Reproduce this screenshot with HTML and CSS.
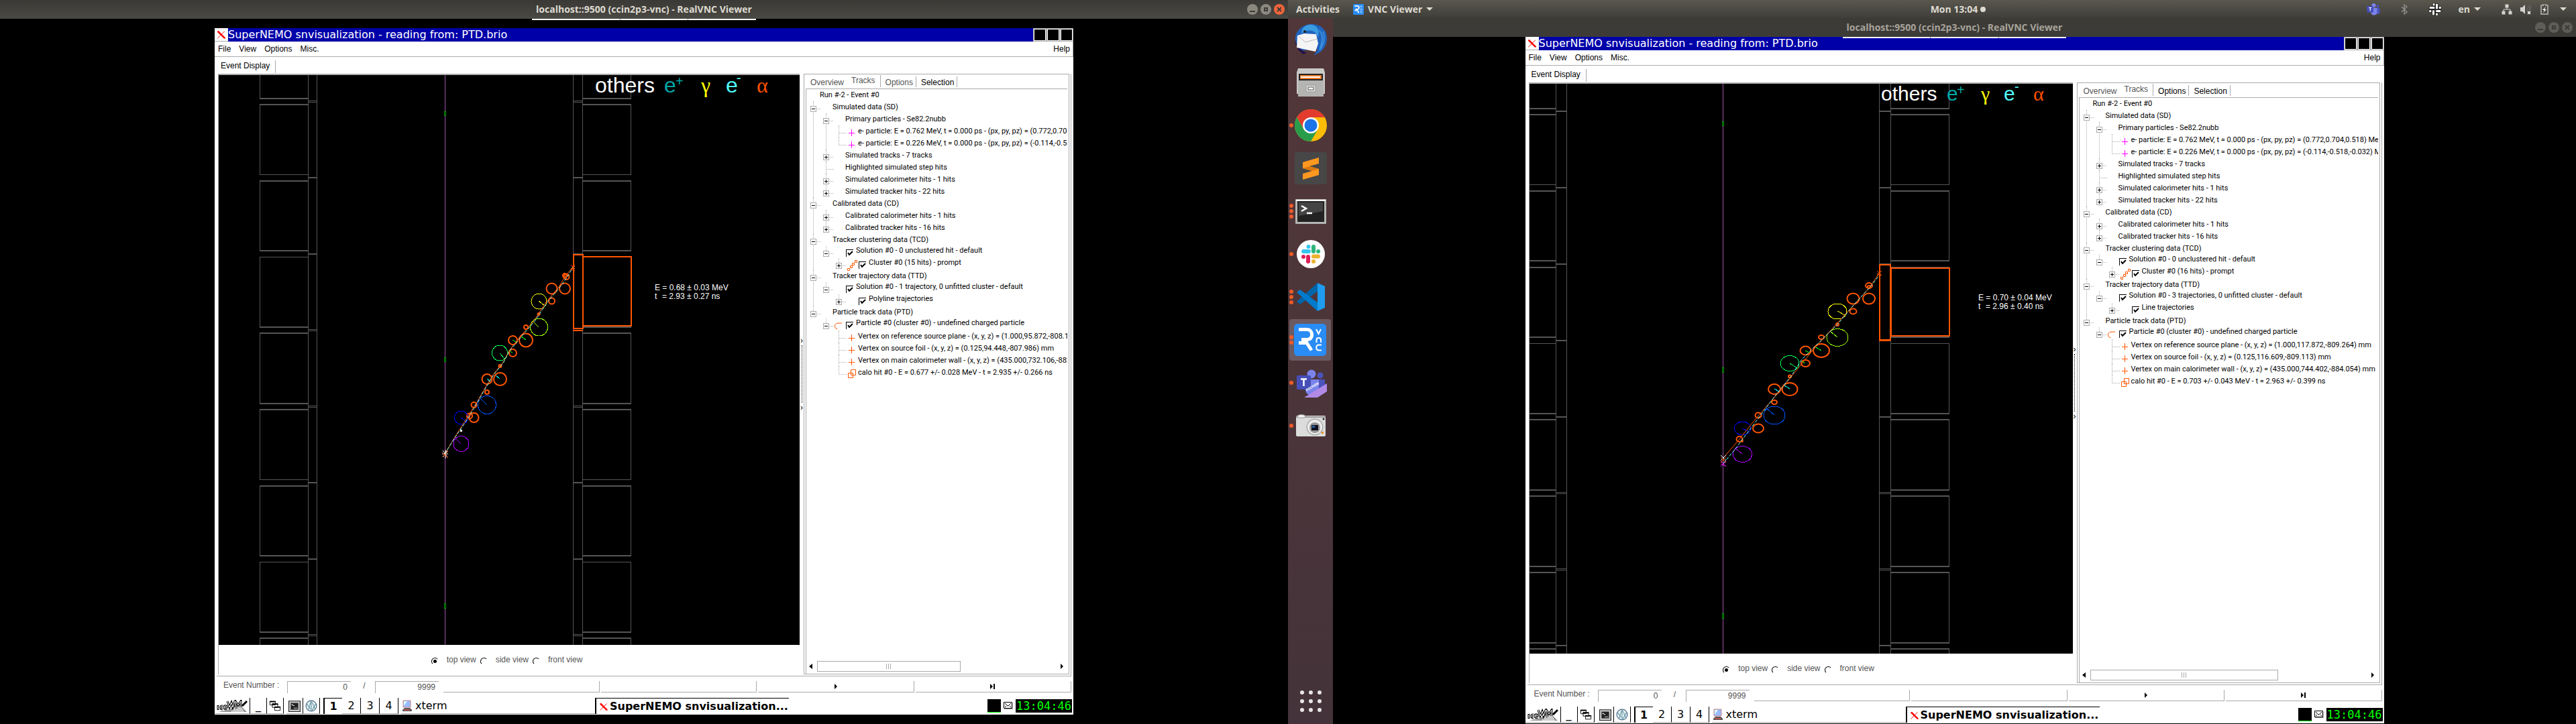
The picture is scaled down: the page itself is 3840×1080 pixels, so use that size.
FILE: index.html
```html
<!DOCTYPE html>
<html lang="en">
<head>
<meta charset="utf-8">
<title>RealVNC Viewer</title>
<link rel="stylesheet" href="styles.css">
</head>
<body>
<svg class="defs" aria-hidden="true">
  <symbol id="i-x" viewBox="0 0 20 20"><path d="M4 5 15 16M5 5l11 11" stroke="#f00" stroke-width="2"/><path d="M15 5 4 16" stroke="#f00"/></symbol>
  <symbol id="i-plus" viewBox="0 0 16 16"><path d="M7.500 3v10M3 8.500h9" stroke="currentColor" fill="none"/></symbol>
  <symbol id="i-chain" viewBox="0 0 16 16"><path d="M1.500 12.500h3v3h-3zM5.500 8.500h3v3h-3zM8.500 4.500h3v3h-3zM12.500.5h3v3h-3z" fill="none" stroke="#f50"/></symbol>
  <symbol id="i-arc" viewBox="0 0 16 16"><path d="M12 4H6C3 5 1 6 1.500 9s2 3 4 4" fill="none" stroke="#f50"/></symbol>
  <symbol id="i-boxes" viewBox="0 0 16 16"><path d="M6.500 1.500h7v8h-7zM2.500 6.500h7v7h-7z" fill="#fff" stroke="#f50"/></symbol>
  <symbol id="i-left" viewBox="0 0 6 8"><path d="M5 0v8L0 4z"/></symbol>
  <symbol id="i-right" viewBox="0 0 6 8"><path d="M1 0v8l4-4z"/></symbol>
  <symbol id="i-end" viewBox="0 0 8 8"><path d="M0 0v8l4-4zM5 0h2v8H5z"/></symbol>
  <symbol id="i-ice" viewBox="0 0 46 18"><path d="M3 18c8-3 14-2 18-5s8-7 11-6 4 1 6 4l7 7z" fill="#999"/><path d="M20 18l6-8 3 4 5-7 5 6 3 5" fill="#ccc" stroke="#444" stroke-dasharray="1 1"/><path d="M38 9 45 2M2 8v7M9 9c-4-1-4 5 0 5M11 11h4c0-3-4-3-4 0s3 3 4 2M16 2l3 9 3-7 2 7 3-9M28 11V2l4 6 4-6v9" fill="none" stroke="#000" stroke-width="3"/><path d="M2 9v5M9 9c-4-1-4 5 0 5M11 11h4c0-3-4-3-4 0s3 3 4 2M16 2l3 9 3-7 2 7 3-9M28 11V2l4 6 4-6v9" fill="none" stroke="#fff"/></symbol>
  <symbol id="i-wins" viewBox="0 0 20 18"><path d="M1.500 1.500h9v6h-9zM5.500 5.500h9v6h-9zM9.500 10.500h9v6h-9z" fill="#fff" stroke="#000"/><path d="M1 2h10M5 6h10M9 11h10" stroke="#000" stroke-width="2"/></symbol>
  <symbol id="i-term" viewBox="0 0 16 16"><path d="M.5 1.500h15v14H.5z" fill="#ccc" stroke="#222"/><path d="M3 4h10v9H3z" fill="#222"/><path d="M4 6h2v1H4zM6 7h2v1H6z" fill="#fff"/><path d="M7 10h5v2H7z" fill="#777"/></symbol>
  <symbol id="i-globe" viewBox="0 0 16 16"><circle cx="8" cy="8" r="7" fill="#e8f0f0" stroke="#468"/><path d="M8 1 4 13M8 1v14M9 3l4 9M2 5l5 7M14 5l-5 9" fill="none" stroke="#69a"/></symbol>
  <symbol id="i-pc" viewBox="0 0 14 18"><path d="M1 1h11v10H1z" fill="#9bf" stroke="#c88"/><path d="M2 2h5L2 9z" fill="#dff"/><path d="M3 12h8l3 3v2H0v-2z" fill="#555"/><path d="M2 14h9v2H2z" fill="#b55"/></symbol>
  <symbol id="i-mail" viewBox="0 0 14 11"><path d="M1 10.500h13V2" stroke="#999" fill="none"/><path d="M.5.5h12v9H.5z" fill="#fff" stroke="#000"/><path d="m2 2 4 4h1l4-4M2 8l2-2M11 8 9 6" fill="none" stroke="#000"/></symbol>
  <symbol id="i-vnc" viewBox="0 0 48 48"><rect width="48" height="48" rx="5" fill="#2a8cf5"/><path d="M7 8.500h12c10 0 10 15 1 15h-9M7 28.500h12l7 11" fill="none" stroke="#fff" stroke-width="5"/><path d="m33 8 3.500 7L40 8M33.500 28v-4c0-4 6.500-4 6.500 0v4M41 31.500h-4c-5 0-5 8 0 8h4" fill="none" stroke="#fff" stroke-width="2"/></symbol>
  <symbol id="i-teams" viewBox="0 0 48 48"><circle cx="38" cy="13" r="4.500" fill="#4b53bc"/><path d="M34 19h11v14c0 5-6 8-11 5z" fill="#4b53bc"/><circle cx="25" cy="11" r="6.500" fill="#7b83eb"/><path d="M16 19h20v15c0 12-20 12-20 0z" fill="#7b83eb"/><rect x="3" y="13" width="21" height="21" rx="2" fill="#464eb8"/><path d="M9 18.500h9M13.500 18v11" stroke="#fff" stroke-width="2.500"/></symbol>
</svg>
<div class="screens">
  <section class="screen">
    <header class="titlebar">
      <h1 class="caption">localhost::9500 (ccin2p3-vnc) - RealVNC Viewer<span class="pulltab"><i></i><i></i><i></i></span></h1>
      <div class="winbtns">
        <button aria-label="Minimise"><svg viewBox="0 0 16 16"><path d="M4 11h8" stroke-width="2"/></svg></button>
        <button aria-label="Restore"><svg viewBox="0 0 16 16"><path d="M6 6h4v4H6z" stroke-width="2"/></svg></button>
        <button class="close" aria-label="Close"><svg viewBox="0 0 16 16"><path d="m5 5 6 6m0-6-6 6" stroke-width="2"/></svg></button>
      </div>
    </header>
    <main class="desk spaced">
      <div class="remote">
        <div class="wmtitle"><svg class="xico"><use href="#i-x"/></svg><span>SuperNEMO snvisualization - reading from: PTD.brio</span><button aria-label="Iconify"></button><button aria-label="Maximise"></button><button aria-label="Close"></button></div>
        <nav class="menu"><button>File</button><button>View</button><button>Options</button><button>Misc.</button><button class="help">Help</button></nav>
        <div class="doctabs"><button>Event Display</button></div>
        <div class="split">
          <div class="frame">
            <svg class="canvas" viewBox="0 0 866 850">
              <g class="det">
                <path d="M61.500 0V35M133.500 0V35M61.500 44V148M61.500 158V261M61.500 271V376M61.500 385V490M61.500 499V603M61.500 613V716M61.500 726V830M61.500 839V850M133.500 0V850M146.500 0V850M528.500 0V850M542.500 0V850M614.500 0V35M614.500 44V148M614.500 158V261M614.500 271V376M614.500 385V490M614.500 499V603M614.500 613V716M614.500 726V830M614.500 839V850"/>
                <path class="thick" d="M61 35h72M61 44h72M61 158h72M61 262h72M61 376h72M61 385h72M61 490h72M61 499h72M61 613h72M61 717h72M61 831h72M61 840h72M542 35h73M542 44h73M542 158h73M542 262h73M542 271h73M542 376h73M542 385h73M542 490h73M542 499h73M542 613h73M542 717h73M542 831h73M542 840h73M133 153h14M133 267h14M133 608h14M133 722h14M528 153h15M528 267h15M528 608h15M528 722h15"/>
                <path d="M61 148.500h72M61 271.500h72M61 603.500h72M61 726.500h72M542 148.500h73M542 603.500h73M542 726.500h73M133 38.500h14M133 40.500h14M133 379.500h14M133 381.500h14M133 493.500h14M133 495.500h14M133 834.500h14M133 836.500h14M528 38.500h15M528 40.500h15M528 381.500h15M528 493.500h15M528 495.500h15M528 834.500h15M528 836.500h15"/>
              </g>
              <path class="foil" d="M337.500 0V850"/>
              <path class="mark" d="M336.500 54.500h2v6h-2zM336.500 421.500h2v6h-2zM336.500 788.500h2v7h-2z"/>
              <path class="hitbox" d="M529 268h14v110h-14zM543 271h72v103h-72zM528 381h15"/>
              <g class="hits">
                <circle cx="516" cy="299" r="3"/><circle cx="518.500" cy="301" r="4"/><circle cx="516" cy="318.500" r="8"/><circle cx="496.500" cy="318.500" r="8"/><circle cx="496.500" cy="337" r="4.500"/><circle cx="477" cy="356.500" r="1.500"/><circle cx="458" cy="376" r="3"/><circle cx="458" cy="395.500" r="10"/><circle cx="438.500" cy="395.500" r="6.500"/><circle cx="438.500" cy="414.500" r="5.500"/><circle cx="419.500" cy="434" r="2"/><circle cx="400" cy="453.500" r="7.500"/><circle cx="419.500" cy="453.500" r="9.500"/><circle cx="400" cy="473" r="3"/><circle cx="380.500" cy="492" r="4"/><circle cx="380.500" cy="511" r="7"/><circle cx="374" cy="508.500" r="4"/>
              </g>
              <g class="drift">
                <circle cx="477.500" cy="337.500" r="11.500" stroke="#ff0"/><circle cx="477.500" cy="376" r="13" stroke="#9f0"/><circle cx="419" cy="414.500" r="11.500" stroke="#0f5"/><circle cx="400" cy="492" r="13.500" stroke="#05f"/><circle cx="361.500" cy="511" r="10" stroke="#00f"/><circle cx="361.500" cy="550" r="11.500" stroke="#a0f"/>
                <path d="m477 337 8 6" stroke="#ff0"/><path d="m477 376-9-9" stroke="#9f0"/><path d="m419 415 7 8" stroke="#0f5"/><path d="m400 492-9-9" stroke="#05f"/><path d="m361 511 7 5" stroke="#00f"/><path d="m361 550-8-8" stroke="#a0f"/><path d="m458 395-7-5M438 395l5 3M438 414l-5-3" stroke="#0f0"/><path d="m400 453 5 4M419 453l-6-5" stroke="#0ff"/>
              </g>
              <path class="track" d="M337 565 352 540 368 515 386 486 398 465 409 447 425 427 433 411 447 393 471 365 487 340 507 316 516 301 528 286"/>
              <path class="sim" d="M337 565 352 541 369 516 387 486 399 465 410 447 425 428 433 412 447 395 472 366 489 340 508 317 519 302 528 287"/>
              <path class="vtx white" d="m334 560 7 10m0-10-7 10m-1-5h9m-4-6v13"/><path class="vtx" d="m333 563 9 8m0-10-8 8"/><path class="vtx" d="m525 283 6 6m0-6-6 6 6 3m0-7-6 6"/><path d="M360 529h3v3h-3z" fill="#fff"/>
              <g class="legend"><text x="561" y="26" fill="#fff">others</text><text x="664" y="26" fill="#00a8a8">e</text><text class="sup" x="681" y="16" fill="#00a8a8">+</text><text class="sym" x="719" y="26" fill="#ff0">γ</text><text x="756" y="26" fill="#50ffff">e</text><text class="sup" x="772" y="11" fill="#50ffff">-</text><text class="sym" x="802" y="26" fill="#ff5000">α</text></g>
              <g class="meas"><text x="650" y="321">E = 0.68 ± 0.03 MeV</text><text x="650" y="334">t</text><text x="661" y="334">= 2.93 ± 0.27 ns</text></g>
            </svg>
            <div class="views"><label><input type="radio" name="v1" checked><span>top view</span></label><label><input type="radio" name="v1"><span>side view</span></label><label><input type="radio" name="v1"><span>front view</span></label></div>
          </div>
          <div class="handle"><i>›</i><b></b><i>›</i></div>
          <aside class="side">
            <div class="tabs"><button class="dim">Overview</button><button class="dim on">Tracks</button><button class="dim">Options</button><button>Selection</button></div>
            <div class="pane">
              <div class="tree">
                <div class="root">Run #-2 - Event #0</div>
                <ul>
                  <li><div class="row"><button class="tg minus" aria-label="Collapse"></button><span class="ic"></span>Simulated data (SD)</div>
                    <ul>
                      <li><div class="row"><button class="tg minus" aria-label="Collapse"></button><span class="ic"></span>Primary particles - Se82.2nubb</div>
                        <ul>
                          <li><div class="row"><span class="lf"></span><svg class="ic mg"><use href="#i-plus"/></svg>e- particle: E = 0.762 MeV, t = 0.000 ps - (px, py, pz) = (0.772,0.704,0.518) MeV</div></li>
                          <li><div class="row"><span class="lf"></span><svg class="ic mg"><use href="#i-plus"/></svg>e- particle: E = 0.226 MeV, t = 0.000 ps - (px, py, pz) = (-0.114,-0.518,-0.032) MeV</div></li>
                        </ul></li>
                      <li><div class="row"><button class="tg plus" aria-label="Expand"></button><span class="ic"></span>Simulated tracks - 7 tracks</div></li>
                      <li><div class="row"><span class="lf"></span><span class="ic"></span>Highlighted simulated step hits</div></li>
                      <li><div class="row"><button class="tg plus" aria-label="Expand"></button><span class="ic"></span>Simulated calorimeter hits - 1 hits</div></li>
                      <li><div class="row"><button class="tg plus" aria-label="Expand"></button><span class="ic"></span>Simulated tracker hits - 22 hits</div></li>
                    </ul></li>
                  <li><div class="row"><button class="tg minus" aria-label="Collapse"></button><span class="ic"></span>Calibrated data (CD)</div>
                    <ul>
                      <li><div class="row"><button class="tg plus" aria-label="Expand"></button><span class="ic"></span>Calibrated calorimeter hits - 1 hits</div></li>
                      <li><div class="row"><button class="tg plus" aria-label="Expand"></button><span class="ic"></span>Calibrated tracker hits - 16 hits</div></li>
                    </ul></li>
                  <li><div class="row"><button class="tg minus" aria-label="Collapse"></button><span class="ic"></span>Tracker clustering data (TCD)</div>
                    <ul>
                      <li><div class="row"><button class="tg minus" aria-label="Collapse"></button><span class="ic"></span><label><input type="checkbox" checked><span>Solution #0 - 0 unclustered hit - default</span></label></div>
                        <ul><li><div class="row"><button class="tg plus" aria-label="Expand"></button><svg class="ic"><use href="#i-chain"/></svg><label><input type="checkbox" checked><span>Cluster #0 (15 hits) - prompt</span></label></div></li></ul></li>
                    </ul></li>
                  <li><div class="row"><button class="tg minus" aria-label="Collapse"></button><span class="ic"></span>Tracker trajectory data (TTD)</div>
                    <ul>
                      <li><div class="row"><button class="tg minus" aria-label="Collapse"></button><span class="ic"></span><label><input type="checkbox" checked><span>Solution #0 - 1 trajectory, 0 unfitted cluster - default</span></label></div>
                        <ul><li><div class="row"><button class="tg plus" aria-label="Expand"></button><span class="ic"></span><label><input type="checkbox" checked><span>Polyline trajectories</span></label></div></li></ul></li>
                    </ul></li>
                  <li><div class="row"><button class="tg minus" aria-label="Collapse"></button><span class="ic"></span>Particle track data (PTD)</div>
                    <ul>
                      <li><div class="row"><button class="tg minus" aria-label="Collapse"></button><svg class="ic"><use href="#i-arc"/></svg><label><input type="checkbox" checked><span>Particle #0 (cluster #0) - undefined charged particle</span></label></div>
                        <ul>
                          <li><div class="row"><span class="lf"></span><svg class="ic or"><use href="#i-plus"/></svg>Vertex on reference source plane - (x, y, z) = (1.000,95.872,-808.153) mm</div></li>
                          <li><div class="row"><span class="lf"></span><svg class="ic or"><use href="#i-plus"/></svg>Vertex on source foil - (x, y, z) = (0.125,94.448,-807.986) mm</div></li>
                          <li><div class="row"><span class="lf"></span><svg class="ic or"><use href="#i-plus"/></svg>Vertex on main calorimeter wall - (x, y, z) = (435.000,732.106,-882.869) mm</div></li>
                          <li><div class="row"><span class="lf"></span><svg class="ic"><use href="#i-boxes"/></svg>calo hit #0 - E = 0.677 +/- 0.028 MeV - t = 2.935 +/- 0.266 ns</div></li>
                        </ul></li>
                    </ul></li>
                </ul>
              </div>
              <div class="hbar"><button aria-label="Scroll left"><svg><use href="#i-left"/></svg></button><div class="groove"><div class="thumb a"><i></i><i></i><i></i></div></div><button aria-label="Scroll right"><svg><use href="#i-right"/></svg></button></div>
            </div>
          </aside>
        </div>
        <div class="eventbar"><label for="ev1">Event Number :</label><input id="ev1" value="0"><span>/</span><input value="9999" aria-label="Last event"><div class="steps"><button aria-label="First"></button><button aria-label="Previous"></button><button aria-label="Next"><svg><use href="#i-right"/></svg></button><button aria-label="Last"><svg><use href="#i-end"/></svg></button></div></div>
        <div class="taskbar">
          <button class="tb logo" aria-label="IceWM menu"><svg><use href="#i-ice"/></svg></button><button class="tb low" aria-label="Show desktop">_</button><button class="tb" aria-label="Windows"><svg><use href="#i-wins"/></svg></button><button class="tb gap" aria-label="Terminal"><svg><use href="#i-term"/></svg></button><button class="tb" aria-label="Browser"><svg><use href="#i-globe"/></svg></button><button class="ws sel">1</button><button class="ws">2</button><button class="ws">3</button><button class="ws">4</button><button class="task"><svg><use href="#i-pc"/></svg>xterm</button><button class="task cur"><svg class="tx"><use href="#i-x"/></svg>SuperNEMO snvisualization...</button>
          <div class="tray"><i class="cpu"></i><svg><use href="#i-mail"/></svg><time>13:04:46</time></div>
        </div>
      </div>
    </main>
  </section>

  <section class="screen">
    <header class="panel">
      <div class="pleft"><button>Activities</button><button class="app"><svg><use href="#i-vnc"/></svg>VNC Viewer<i class="caret"></i></button></div>
      <button class="clock">Mon 13:04<i class="dot"></i></button>
      <div class="status">
        <svg class="s-teams"><use href="#i-teams"/></svg>
        <svg class="s-bt" viewBox="0 0 16 16"><path d="m4 4 8 8-4 3V1l4 3-8 8" fill="none" stroke="#8a8984" stroke-width="1.500"/></svg>
        <svg class="s-slack" viewBox="0 0 20 20"><path d="M8 3v5M3 8h5M12 3v5M12 8h5M8 12v5M3 12h5M12 12v5M12 12h5" stroke="#222" stroke-width="5" stroke-linecap="round"/><path d="M8 2.500V3M3 7.500h5M12.500 3v5M17 7.500h.5M2.500 12.500H3M7.500 12.500V17M12.500 12.500H17M12.500 17v.5" stroke="#fff" stroke-width="3" stroke-linecap="round"/></svg>
        <button class="lang">en<i class="caret"></i></button>
        <svg class="s-net" viewBox="0 0 16 16"><path d="M5.500.5h5v5h-5zM.5 10.500h5v5h-5zM10.500 10.500h5v5h-5z" fill="#d5d3cf"/><path d="M8 5v3M3 11V8h10v3" fill="none" stroke="#d5d3cf"/></svg>
        <svg class="s-vol" viewBox="0 0 16 16"><path d="M0 5h3l4-4v14l-4-4H0z" fill="#d5d3cf"/><path d="M9 5c2 2 2 4 0 6M11 3c3 3 3 6 1 8M13 1c3 3 3 5 2 9" fill="none" stroke="#777"/><path d="m11 11 4 4m0-4-4 4" stroke="#fff" stroke-width="1.500"/></svg>
        <svg class="s-bat" viewBox="0 0 16 16"><path d="M3 2h3V0h4v2h3v13H3z" fill="none" stroke="#a09e9a" stroke-width="2"/><path d="m10 4-5 5h3l-2 4 5-5H8z" fill="#fff"/></svg>
        <i class="caret"></i>
      </div>
    </header>
    <div class="below">
      <nav class="dock" aria-label="Dock">
        <button aria-label="Thunderbird"><svg viewBox="0 0 48 48"><path d="M1 25C0 12 10 2 24 1c14-1 24 9 24 20 0 13-8 24-20 26 3-3 5-5 6-9L12 40C4 37 1 30 1 25z" fill="#1f63bd"/><path d="M13 46C5 41 1 34 1 24c2 9 7 16 17 20z" fill="#20124d"/><path d="m4 18 10-3 18 1 3 14-4 12L3 36z" fill="#f5f5f5"/><path d="m6 19 10 9 18-5" fill="none" stroke="#bbb"/><path d="M10 15C10 5 20-1 29 3c5 2 8 8 6 17l-5-7c-6-4-13-3-20 2z" fill="#3b9be0"/><circle cx="15" cy="12" r="2" fill="#222"/><path d="M36 10c6 5 6 15 2 27M42 12c4 8 1 20-5 28" stroke="#3b8edb" stroke-width="2" fill="none"/></svg></button>
        <button aria-label="Files"><svg viewBox="0 0 48 48"><path d="M5 3h38l2 6v32H3V9z" fill="#c9c9c7"/><path d="M6 11h36v10H6z" fill="#222"/><path d="M8 13h32v6H8z" fill="#f08030"/><path d="M9 15h29v2H9z" fill="#fff"/><path d="M5 21h38v24H5z" fill="#b4b4b2"/><rect x="17" y="28" width="14" height="10" rx="2" fill="#ddd" stroke="#999"/><path d="M20 31h8v4h-8z" fill="#fff" stroke="#555"/></svg></button>
        <button class="r1" aria-label="Chrome"><svg viewBox="0 0 48 48"><circle cx="24" cy="24" r="24" fill="#fbbc05"/><path d="M3.200 12a24 24 0 0 1 41.600 0H24L13.600 30z" fill="#e33b2e"/><path d="M3.200 12A24 24 0 0 0 24 48l10.400-18-20.800 0z" fill="#2a9d4b"/><circle cx="24" cy="24" r="12" fill="#fff"/><circle cx="24" cy="24" r="9.500" fill="#1a73e8"/></svg></button>
        <button aria-label="Sublime Text"><svg viewBox="0 0 48 48"><rect width="48" height="48" rx="3" fill="#474747"/><path d="m12 15 24-7v9l-14 4 14 4v9l-24 7v-9l14-4-14-4z" fill="#ff9820"/><path d="m12 24 14 4 10-3-14-4z" fill="#d87a10"/></svg></button>
        <button class="r3" aria-label="Terminal"><svg viewBox="0 0 48 48"><rect x="1" y="6" width="46" height="37" rx="1" fill="#b5b5b3"/><path d="M2 7h44v2H2z" fill="#fff"/><rect x="4" y="9" width="40" height="31" fill="#222"/><path d="M6 11h36v13L6 31z" fill="#444"/><path d="m10 16 7 4-7 4M18 27h8" fill="none" stroke="#fff" stroke-width="2.500"/></svg></button>
        <button class="r1" aria-label="Slack"><svg viewBox="0 0 48 48"><circle cx="24" cy="24" r="21" fill="#fff"/><g stroke-width="6" stroke-linecap="round"><path d="M13 20h8M20.500 13v.1" stroke="#36c5f0"/><path d="M28 13v7M35 20h.1" stroke="#2eb67d"/><path d="M20 28v7M13 28h.1" stroke="#e01e5a"/><path d="M28 27.500h7M28 35h.1" stroke="#ecb22e"/></g></svg></button>
        <button class="r3" aria-label="Visual Studio Code"><svg viewBox="0 0 48 48"><path d="m34 3-31 28 5 4 27-20z" fill="#0065a9"/><path d="m34 45-31-28 5-4 27 20z" fill="#007acc"/><path d="m34 3 11 5v32l-11 5z" fill="#1f9cf0"/></svg></button>
        <button class="r2 here" aria-label="VNC Viewer"><svg><use href="#i-vnc"/></svg></button>
        <button class="r1" aria-label="Teams"><svg viewBox="0 0 48 48"><use href="#i-teams"/><path d="M14 46 48 25v12L34 46z" fill="#b18ae6"/><text class="pre" x="22" y="33" transform="rotate(-31 27 42)">PREVIEW</text></svg></button>
        <button class="r1" aria-label="Camera"><svg viewBox="0 0 48 48"><rect x="2" y="9" width="44" height="31" rx="2" fill="#dcdcdc"/><path d="M2 10h44v2H2z" fill="#999"/><ellipse cx="10" cy="10" rx="6" ry="2.500" fill="#eee" stroke="#999"/><circle cx="30" cy="26" r="12.500" fill="#aaa"/><circle cx="30" cy="26" r="11" fill="#eee"/><circle cx="30" cy="27" r="8" fill="#999"/><rect x="25" y="23" width="10" height="8" fill="#112"/><path d="M26 24h4v3h-4z" fill="#26a"/><circle cx="43" cy="14" r="1.500" fill="#222"/><path d="M40 33h3v3h-3z" fill="#f0902a"/></svg></button>
        <button class="grid" aria-label="Show applications"><svg viewBox="0 0 48 48"><g fill="#e8e6e4"><circle cx="11" cy="11" r="3"/><circle cx="24" cy="11" r="3"/><circle cx="37" cy="11" r="3"/><circle cx="11" cy="24" r="3"/><circle cx="24" cy="24" r="3"/><circle cx="37" cy="24" r="3"/><circle cx="11" cy="37" r="3"/><circle cx="24" cy="37" r="3"/><circle cx="37" cy="37" r="3"/></g></svg></button>
      </nav>
      <div class="content">
        <header class="titlebar idle">
          <h1 class="caption">localhost::9500 (ccin2p3-vnc) - RealVNC Viewer<span class="pulltab"><i></i><i></i><i></i></span></h1>
          <div class="winbtns">
            <button aria-label="Minimise"><svg viewBox="0 0 16 16"><path d="M4 11h8" stroke-width="2"/></svg></button>
            <button aria-label="Restore"><svg viewBox="0 0 16 16"><path d="M6 6h4v4H6z" stroke-width="2"/></svg></button>
            <button aria-label="Close"><svg viewBox="0 0 16 16"><path d="m5 5 6 6m0-6-6 6" stroke-width="2"/></svg></button>
          </div>
        </header>
        <main class="desk">
          <div class="remote wide">
            <div class="wmtitle"><svg class="xico"><use href="#i-x"/></svg><span>SuperNEMO snvisualization - reading from: PTD.brio</span><button aria-label="Iconify"></button><button aria-label="Maximise"></button><button aria-label="Close"></button></div>
            <nav class="menu"><button>File</button><button>View</button><button>Options</button><button>Misc.</button><button class="help">Help</button></nav>
            <div class="doctabs"><button>Event Display</button></div>
            <div class="split">
              <div class="frame">
                <svg class="canvas" viewBox="0 0 810 850">
                  <g class="det">
                    <path d="M39.500 0V850M55.500 0V850M521.500 0V850M538.500 0V850M625.500 0V37M625.500 46V150M625.500 160V264M625.500 274V378M625.500 387V492M625.500 501V606M625.500 615V720M625.500 729V834M625.500 843V850"/>
                    <path class="thick" d="M0 37h39M0 46h39M0 160h39M0 264h39M0 274h39M0 378h39M0 492h39M0 501h39M0 606h39M0 615h39M0 720h39M0 729h39M0 834h39M0 843h39M538 37h88M538 46h88M538 160h88M538 264h88M538 274h88M538 378h88M538 492h88M538 501h88M538 606h88M538 615h88M538 720h88M538 729h88M538 834h88M538 843h88M39 41h16M39 155h16M39 269h16M39 383h16M39 497h16M39 838h16M521 41h17M521 155h17M521 269h17M521 497h17M521 838h17"/>
                    <path d="M0 150.500h39M0 387.500h39M538 150.500h88M538 387.500h88M39 609.500h16M39 611.500h16M39 723.500h16M39 725.500h16M521 609.500h17M521 611.500h17M521 723.500h17M521 725.500h17"/>
                  </g>
                  <path class="foil" d="M288.500 0V850"/>
                  <path class="mark" d="M287.500 56.500h2v6h-2zM287.500 423.500h2v7h-2zM287.500 790.500h2v7h-2z"/>
                  <path class="hitbox" d="M522 270h16v112h-16zM539 275h87v101h-87zM521 383h17"/>
                  <g class="hits">
                    <ellipse cx="506" cy="301" rx="5" ry="4"/><circle cx="506" cy="303" r="2"/><ellipse cx="506" cy="320.500" rx="9" ry="8"/><ellipse cx="482.500" cy="320.500" rx="9" ry="8"/><ellipse cx="482.500" cy="339.500" rx="5" ry="4"/><circle cx="459" cy="359" r="2"/><ellipse cx="435" cy="378" rx="4" ry="3"/><ellipse cx="435" cy="398" rx="12" ry="10"/><ellipse cx="411.500" cy="398" rx="8" ry="6.500"/><ellipse cx="411.500" cy="417" rx="6.500" ry="5"/><circle cx="388" cy="436.500" r="2"/><ellipse cx="365" cy="455.500" rx="9" ry="7.500"/><ellipse cx="388" cy="455.500" rx="11.500" ry="9.500"/><ellipse cx="365" cy="475" rx="4" ry="3"/><ellipse cx="341" cy="494.500" rx="4.500" ry="4"/><ellipse cx="341" cy="514" rx="8" ry="6.500"/><ellipse cx="313" cy="530" rx="4.500" ry="4"/><circle cx="317" cy="533" r="1"/>
                  </g>
                  <g class="drift">
                    <ellipse cx="459" cy="339.500" rx="14" ry="11.500" stroke="#ff0"/><ellipse cx="459" cy="378.500" rx="16" ry="13" stroke="#9f0"/><ellipse cx="388" cy="417" rx="14" ry="11.500" stroke="#0f5"/><ellipse cx="365" cy="494.500" rx="16" ry="13.500" stroke="#05f"/><ellipse cx="317.500" cy="514" rx="12" ry="10" stroke="#00f"/><ellipse cx="317.500" cy="552.500" rx="14" ry="12" stroke="#a0f"/>
                    <path d="m459 339 11 6" stroke="#ff0"/><path d="m459 378-11-9" stroke="#9f0"/><path d="m388 417 11 7" stroke="#0f5"/><path d="m365 494-12-10" stroke="#05f"/><path d="m317 514 9 4" stroke="#00f"/><path d="m317 552-10-8" stroke="#a0f"/><path d="m435 398-8-5M411 398l6 3M411 417l-5-3" stroke="#0f0"/><path d="m365 455 7 4M388 455l-8-5" stroke="#0ff"/>
                  </g>
                  <path class="track" d="m289 558 24-28 19-24 43-50 45-56 55-61 31-34 15-22"/>
                  <path class="sim" d="m289 566 16-19 36-48 24-32 25-31 16-25 53-52 25-30 24-26 13-17"/>
                  <path class="vtx white" d="m285 554 8 8m0-8-8 8"/><path class="vtx" d="m285 557 8 8m0-8-8 8"/><path class="vtx pink" d="m285 563 8 8m0-8-8 8m0-4 8 3"/><path class="vtx" d="m518 279 7 7m0-7-7 7m0-3 7 3"/>
                  <g class="legend"><text x="524" y="25" fill="#fff">others</text><text x="622" y="25" fill="#00a8a8">e</text><text class="sup" x="637" y="16" fill="#00a8a8">+</text><text class="sym" x="673" y="25" fill="#ff0">γ</text><text x="707" y="25" fill="#50ffff">e</text><text class="sup" x="723" y="11" fill="#50ffff">-</text><text class="sym" x="751" y="25" fill="#ff5000">α</text></g>
                  <g class="meas"><text x="669" y="323">E = 0.70 ± 0.04 MeV</text><text x="669" y="336">t</text><text x="680" y="336">= 2.96 ± 0.40 ns</text></g>
                </svg>
                <div class="views"><label><input type="radio" name="v2" checked><span>top view</span></label><label><input type="radio" name="v2"><span>side view</span></label><label><input type="radio" name="v2"><span>front view</span></label></div>
              </div>
              <div class="handle"><i>›</i><b></b><i>›</i></div>
              <aside class="side">
                <div class="tabs"><button class="dim">Overview</button><button class="dim on">Tracks</button><button>Options</button><button>Selection</button></div>
                <div class="pane">
                  <div class="tree">
                    <div class="root">Run #-2 - Event #0</div>
                    <ul>
                      <li><div class="row"><button class="tg minus" aria-label="Collapse"></button><span class="ic"></span>Simulated data (SD)</div>
                        <ul>
                          <li><div class="row"><button class="tg minus" aria-label="Collapse"></button><span class="ic"></span>Primary particles - Se82.2nubb</div>
                            <ul>
                              <li><div class="row"><span class="lf"></span><svg class="ic mg"><use href="#i-plus"/></svg>e- particle: E = 0.762 MeV, t = 0.000 ps - (px, py, pz) = (0.772,0.704,0.518) MeV</div></li>
                              <li><div class="row"><span class="lf"></span><svg class="ic mg"><use href="#i-plus"/></svg>e- particle: E = 0.226 MeV, t = 0.000 ps - (px, py, pz) = (-0.114,-0.518,-0.032) MeV</div></li>
                            </ul></li>
                          <li><div class="row"><button class="tg plus" aria-label="Expand"></button><span class="ic"></span>Simulated tracks - 7 tracks</div></li>
                          <li><div class="row"><span class="lf"></span><span class="ic"></span>Highlighted simulated step hits</div></li>
                          <li><div class="row"><button class="tg plus" aria-label="Expand"></button><span class="ic"></span>Simulated calorimeter hits - 1 hits</div></li>
                          <li><div class="row"><button class="tg plus" aria-label="Expand"></button><span class="ic"></span>Simulated tracker hits - 22 hits</div></li>
                        </ul></li>
                      <li><div class="row"><button class="tg minus" aria-label="Collapse"></button><span class="ic"></span>Calibrated data (CD)</div>
                        <ul>
                          <li><div class="row"><button class="tg plus" aria-label="Expand"></button><span class="ic"></span>Calibrated calorimeter hits - 1 hits</div></li>
                          <li><div class="row"><button class="tg plus" aria-label="Expand"></button><span class="ic"></span>Calibrated tracker hits - 16 hits</div></li>
                        </ul></li>
                      <li><div class="row"><button class="tg minus" aria-label="Collapse"></button><span class="ic"></span>Tracker clustering data (TCD)</div>
                        <ul>
                          <li><div class="row"><button class="tg minus" aria-label="Collapse"></button><span class="ic"></span><label><input type="checkbox" checked><span>Solution #0 - 0 unclustered hit - default</span></label></div>
                            <ul><li><div class="row"><button class="tg plus" aria-label="Expand"></button><svg class="ic"><use href="#i-chain"/></svg><label><input type="checkbox" checked><span>Cluster #0 (16 hits) - prompt</span></label></div></li></ul></li>
                        </ul></li>
                      <li><div class="row"><button class="tg minus" aria-label="Collapse"></button><span class="ic"></span>Tracker trajectory data (TTD)</div>
                        <ul>
                          <li><div class="row"><button class="tg minus" aria-label="Collapse"></button><span class="ic"></span><label><input type="checkbox" checked><span>Solution #0 - 3 trajectories, 0 unfitted cluster - default</span></label></div>
                            <ul><li><div class="row"><button class="tg plus" aria-label="Expand"></button><span class="ic"></span><label><input type="checkbox" checked><span>Line trajectories</span></label></div></li></ul></li>
                        </ul></li>
                      <li><div class="row"><button class="tg minus" aria-label="Collapse"></button><span class="ic"></span>Particle track data (PTD)</div>
                        <ul>
                          <li><div class="row"><button class="tg minus" aria-label="Collapse"></button><svg class="ic"><use href="#i-arc"/></svg><label><input type="checkbox" checked><span>Particle #0 (cluster #0) - undefined charged particle</span></label></div>
                            <ul>
                              <li><div class="row"><span class="lf"></span><svg class="ic or"><use href="#i-plus"/></svg>Vertex on reference source plane - (x, y, z) = (1.000,117.872,-809.264) mm</div></li>
                              <li><div class="row"><span class="lf"></span><svg class="ic or"><use href="#i-plus"/></svg>Vertex on source foil - (x, y, z) = (0.125,116.609,-809.113) mm</div></li>
                              <li><div class="row"><span class="lf"></span><svg class="ic or"><use href="#i-plus"/></svg>Vertex on main calorimeter wall - (x, y, z) = (435.000,744.402,-884.054) mm</div></li>
                              <li><div class="row"><span class="lf"></span><svg class="ic"><use href="#i-boxes"/></svg>calo hit #0 - E = 0.703 +/- 0.043 MeV - t = 2.963 +/- 0.399 ns</div></li>
                            </ul></li>
                        </ul></li>
                    </ul>
                  </div>
                  <div class="hbar"><button aria-label="Scroll left"><svg><use href="#i-left"/></svg></button><div class="groove"><div class="thumb b"><i></i><i></i><i></i></div></div><button aria-label="Scroll right"><svg><use href="#i-right"/></svg></button></div>
                </div>
              </aside>
            </div>
            <div class="eventbar"><label for="ev2">Event Number :</label><input id="ev2" value="0"><span>/</span><input value="9999" aria-label="Last event"><div class="steps"><button aria-label="First"></button><button aria-label="Previous"></button><button aria-label="Next"><svg><use href="#i-right"/></svg></button><button aria-label="Last"><svg><use href="#i-end"/></svg></button></div></div>
            <div class="taskbar">
              <button class="tb logo" aria-label="IceWM menu"><svg><use href="#i-ice"/></svg></button><button class="tb low" aria-label="Show desktop">_</button><button class="tb" aria-label="Windows"><svg><use href="#i-wins"/></svg></button><button class="tb gap" aria-label="Terminal"><svg><use href="#i-term"/></svg></button><button class="tb" aria-label="Browser"><svg><use href="#i-globe"/></svg></button><button class="ws sel">1</button><button class="ws">2</button><button class="ws">3</button><button class="ws">4</button><button class="task"><svg><use href="#i-pc"/></svg>xterm</button><button class="task cur"><svg class="tx"><use href="#i-x"/></svg>SuperNEMO snvisualization...</button>
              <div class="tray"><i class="cpu"></i><svg><use href="#i-mail"/></svg><time>13:04:46</time></div>
            </div>
          </div>
        </main>
      </div>
    </div>
  </section>
</div>
</body>
</html>
```
FILE: styles.css
```css
* { box-sizing: border-box; }
body { margin: 0; background: #000; font: 12px/14px "Liberation Sans", Arial, sans-serif; color: #000; }
button { font: inherit; color: inherit; background: none; border: 0; padding: 0; margin: 0; }
ul { list-style: none; margin: 0; padding: 0; }
.defs { position: absolute; width: 0; height: 0; }

.screens { display: grid; grid-template-columns: minmax(0, 1fr) minmax(0, 1fr); min-height: 100vh; }
.screen { display: flex; flex-direction: column; min-width: 0; }

/* host window title bars */
.titlebar { display: grid; grid-template-columns: 1fr auto 1fr; align-items: center; height: 28px; padding: 0 5px; background: linear-gradient(#3a3935, #4a4943); color: #dfdbd2; }
.titlebar.idle { background: #3c3b37; color: #a8a49b; }
.caption { grid-column: 2; position: relative; margin: 0; font: bold 14px/28px "Open Sans", "Noto Sans", sans-serif; white-space: nowrap; }
.pulltab { position: absolute; left: -6px; right: -6px; top: 28px; height: 2px; display: flex; gap: 1px; background: #888; z-index: 2; }
.pulltab i { flex: 1; background: #fff; }
.pulltab i:first-child { flex: 1.3; }
.winbtns { display: flex; gap: 4px; justify-self: end; }
.winbtns button { width: 16px; height: 16px; border-radius: 50%; background: #8b897f; }
.winbtns svg { display: block; width: 16px; height: 16px; fill: none; stroke: #3c3b37; }
.winbtns .close { background: #f0643c; }
.idle .winbtns button { background: #5e5d57; }

.desk { display: flex; justify-content: center; }
.desk.spaced { padding: 14px 0; }
.remote { width: min(1280px, 100%); background: #fff; }

/* remote window manager frame */
.wmtitle { display: flex; height: 20px; background: #0000a8; color: #fff; font: 16px/20px "DejaVu Sans", sans-serif; }
.wmtitle span { flex: 1; }
.wmtitle button { width: 20px; background: #000; border: 1px solid #aaa; outline: 1px solid #fff; outline-offset: -2px; }
.xico { width: 20px; height: 20px; background: #fff; border-bottom: 1px solid #aaa; }
.menu { display: flex; gap: 12px; height: 23px; padding: 0 4px 0 5px; border-bottom: 1px solid #aaa; border-right: 1px solid #aaa; }
.help { margin-left: auto; }
.doctabs { height: 25px; padding: 5px 0 1px 5px; }
.doctabs button { height: 19px; padding: 0 8px 4px 4px; border-right: 1px solid #aaa; }

.split { display: flex; margin: 0 3px; padding: 0 2px 2px; border: solid #aaa; border-width: 0 1px 1px 0; }
.frame { flex: 1; min-width: 0; border-left: 1px solid #aaa; border-top: 2px solid #aaa; }
.canvas { display: block; width: 100%; height: auto; background: #000; }
.det path { fill: none; stroke: #555; shape-rendering: crispEdges; }
.det .thick { stroke-width: 2; }
.foil { stroke: #a050a8; shape-rendering: crispEdges; }
.mark { fill: #000; stroke: #00a800; shape-rendering: crispEdges; }
.hitbox { fill: none; stroke: #ff5500; stroke-width: 2; shape-rendering: crispEdges; }
.hits { fill: none; stroke: #ff5500; stroke-width: 2; }
.drift { fill: none; }
.drift * { shape-rendering: crispEdges; }
.track { fill: none; stroke: #ff5500; }
.sim { fill: none; stroke: #70ffff; stroke-dasharray: 5 2; }
.vtx { fill: none; stroke: #ff5500; }
.vtx.white { stroke: #fff; }
.vtx.pink { stroke: #e020e0; }
.legend { font-size: 32px; }
.wide .legend { font-size: 30px; }
.legend .sup { font-size: 20px; }
.legend .sym { font-family: "Liberation Serif", serif; }
.meas { font-size: 12px; fill: #fff; }

.views { display: flex; justify-content: center; align-items: center; gap: 6px; height: 44px; padding-right: 7px; color: #555; }
.views label { display: flex; align-items: center; gap: 12px; }
.views input { appearance: none; width: 11px; height: 11px; margin: 4px 0 0; border: 1px solid; border-color: #000 transparent transparent #000; border-radius: 50%; background: #fff; }
.views input:checked { background: radial-gradient(#000 0 2px, #fff 3px); }
.handle { width: 6px; display: flex; flex-direction: column; align-items: center; padding: 391px 0 391px; font-size: 12px; }
.handle i { font-style: normal; line-height: 14px; }
.handle b { flex: 1; border-left: 1px dotted #000; }

.side { width: 396px; display: flex; flex-direction: column; border: 1px solid #aaa; }
.wide .side { width: 452px; }
.tabs { display: flex; height: 21px; padding-left: 4px; }
.tabs button { padding: 1px 4px 0; border-right: 1px solid #aaa; margin: 3px 2px 2px 1px; }
.tabs button:first-child { border: 0; margin-right: 1px; }
.tabs .on { margin: 1px 2px 2px 1px; padding: 0 7px 3px 5px; }
.dim { color: #555; }
.pane { flex: 1; display: flex; flex-direction: column; min-width: 0; margin: 0 2px; border: solid #aaa; border-width: 1px 0 0 1px; }
.tree { flex: 1; padding-left: 6px; overflow: hidden; font-size: 11px; line-height: 18px; white-space: nowrap; font-family: Roboto, "Liberation Sans", sans-serif; }
.root { padding-left: 14px; }
.tree ul ul { margin-left: 19px; }
.tree li { position: relative; }
.tree li::before { content: ""; position: absolute; left: 4px; top: 0; bottom: 0; border-left: 1px dotted #aaa; }
.tree li:last-child::before { bottom: auto; height: 11px; }
.row { display: flex; align-items: center; height: 18px; }
.tg { position: relative; flex: none; width: 9px; height: 9px; margin: 4px 7px 0 0; border: 1px solid #aaa; background: #fff linear-gradient(#000, #000) center / 5px 1px no-repeat; }
.tg.plus { background: linear-gradient(#000, #000) center / 5px 1px no-repeat, linear-gradient(#000, #000) center / 1px 5px no-repeat, #fff; }
.tg::after { content: ""; position: absolute; left: 9px; top: 3px; width: 5px; border-top: 1px dotted #aaa; }
.lf { flex: none; width: 11px; margin: 4px 0 0 5px; border-top: 1px dotted #aaa; }
.ic { flex: none; width: 16px; height: 16px; margin-right: 1px; }
svg.ic { margin-top: 3px; }
.mg { color: #f0f; }
.or { color: #ff5500; }
.tree label { display: flex; align-items: center; gap: 4px; }
.tree label span { line-height: 14px; padding-bottom: 4px; }
.tree input { appearance: none; width: 11px; height: 11px; margin: 2px 0 0 1px; border: solid #000; border-width: 1px 0 0 1px; }
.tree input:checked { background: url("data:image/svg+xml,%3Csvg xmlns='http://www.w3.org/2000/svg' viewBox='0 0 10 10'%3E%3Cpath d='M2 4l2 3 5-5' fill='none' stroke='%23000' stroke-width='2'/%3E%3C/svg%3E") 0 0 / 10px 10px no-repeat; }

.hbar { display: flex; height: 18px; align-items: center; padding: 0 5px 0 4px; margin-bottom: 2px; }
.hbar button { width: 6px; }
.hbar svg { display: block; width: 6px; height: 8px; }
.groove { flex: 1; margin: 0 6px; }
.thumb { display: flex; justify-content: center; align-items: center; gap: 2px; height: 16px; border: 1px solid #aaa; }
.thumb.a { width: 60%; }
.thumb.b { width: 68%; }
.thumb i { width: 1px; height: 8px; background: #aaa; }

.eventbar { display: flex; height: 32px; padding: 7px 3px 7px 13px; color: #555; }
.eventbar label { width: 95px; line-height: 13px; }
.eventbar input { width: 95px; height: 18px; border: solid #aaa; border-width: 1px 0 0 1px; padding: 0 5px 2px 0; font: inherit; color: inherit; text-align: right; background: none; }
.eventbar span { width: 36px; text-align: center; padding-left: 4px; }
.steps { flex: 1; display: grid; grid-template-columns: repeat(4, 1fr); gap: 2px; margin-left: 7px; height: 17px; }
.steps button { border: solid #aaa; border-width: 0 1px 1px 0; color: #000; }
.steps svg { display: block; width: 8px; height: 8px; margin: 0 auto; }

.taskbar { display: flex; height: 25px; padding-bottom: 1px; font: 16px/20px "DejaVu Sans", sans-serif; }
.tb, .ws { display: flex; align-items: center; justify-content: center; width: 25px; border-right: 1px solid #000; border-bottom: 1px solid #aaa; }
.tb svg { width: 18px; height: 18px; }
.tb.logo { width: 53px; }
.tb.logo svg { width: 46px; }
.tb.gap { margin-left: 4px; }
.ws { width: 28px; }
.ws.sel { margin-left: 5px; border: solid #000; border-width: 1px 0 0 2px; font-weight: bold; }
.task { display: flex; align-items: center; gap: 5px; width: 289px; padding-left: 2px; border-bottom: 1px solid #aaa; white-space: nowrap; }
.ws + .task { margin-left: 4px; }
.task svg { width: 14px; height: 18px; }
.task .tx { width: 18px; }
.task.cur { border: solid #000; border-width: 1px 0 0 2px; gap: 0; font-weight: bold; }
.tray { display: flex; align-items: center; gap: 4px; margin: 0 2px 1px auto; }
.tray svg { width: 14px; height: 11px; }
.cpu { width: 20px; height: 20px; background: #000; border-bottom: 1px solid #0f0; }
.tray time { padding: 0 1px; background: #000; color: #0f0; font: 17px/20px "DejaVu Sans Mono", monospace; }

/* host top panel */
.panel { display: grid; grid-template-columns: 1fr auto 1fr; align-items: center; height: 27px; padding: 0 14px 0 12px; background: linear-gradient(#59574e, #3f3e39); color: #dfdbd2; font: bold 14px/27px "Open Sans", "Noto Sans", sans-serif; }
.pleft { display: flex; gap: 20px; }
.app { display: flex; align-items: center; gap: 6px; }
.app svg { width: 16px; height: 16px; }
.caret { width: 0; height: 0; border: 5px solid transparent; border-top-color: #dfdbd2; border-bottom: 0; }
.clock { display: flex; align-items: center; gap: 4px; padding-left: 80px; }
.dot { width: 8px; height: 8px; border-radius: 50%; background: #dfdbd2; }
.status { display: flex; align-items: center; justify-self: end; }
.s-teams { width: 22px; height: 22px; margin-right: 27px; }
.s-bt { width: 16px; height: 16px; margin-right: 28px; }
.s-slack { width: 20px; height: 20px; margin-right: 25px; }
.lang { display: flex; align-items: center; gap: 6px; margin-right: 31px; }
.s-net { width: 16px; height: 16px; margin-right: 12px; }
.s-vol { width: 16px; height: 16px; margin-right: 12px; }
.s-bat { width: 16px; height: 16px; margin-right: 15px; }

.below { flex: 1; display: flex; }
.dock { display: flex; flex-direction: column; width: 67px; padding-bottom: 2px; background: linear-gradient(#523739, #44333a); }
.dock button { position: relative; display: flex; align-items: center; justify-content: center; height: 64px; }
.dock svg { width: 48px; height: 48px; }
.dock .grid { margin-top: auto; }
.dock .here { margin: 1px 3px 1px 2px; height: 62px; border-radius: 4px; background: #6b5a61; }
.r1::before, .r2::before, .r3::before { content: ""; position: absolute; left: 2px; width: 6px; height: 6px; border-radius: 50%; background: #f05a28; }
.r2::before { left: 0; top: 24px; box-shadow: 0 8px #f05a28; }
.r3::before { box-shadow: 0 -8px #f05a28, 0 8px #f05a28; }
.pre { font: bold 5px "Open Sans", sans-serif; fill: #fff; }
.content { flex: 1; min-width: 0; }
```
